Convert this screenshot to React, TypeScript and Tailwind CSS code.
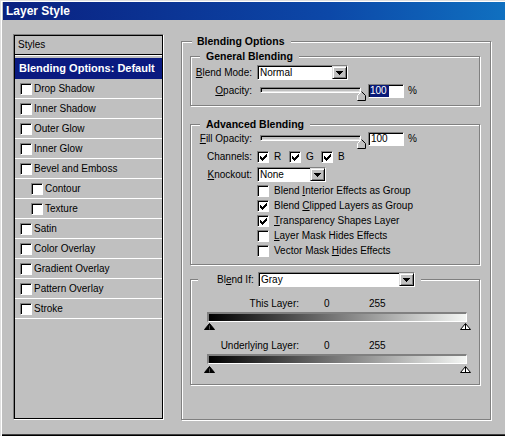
import type { ReactNode } from 'react';

const sunken =
  'border border-t-[#808080] border-l-[#808080] border-b-white border-r-white shadow-[inset_1px_1px_0_#000]';

const etched =
  'border border-[#808080] shadow-[inset_1px_1px_0_#fff,1px_1px_0_#fff]';

function Check({ checked = false }: { checked?: boolean }) {
  return (
    <span
      className={`flex h-[12px] w-[12px] shrink-0 items-center justify-center bg-white ${sunken}`}
    >
      {checked && (
        <svg width="7" height="7" viewBox="0 0 7 7" shapeRendering="crispEdges" className="ml-[1px] mt-[1px]">
          <path d="M6 0h1v1H6zM5 1h2v1H5zM0 2h1v1H0zM4 2h3v1H4zM0 3h2v1H0zM3 3h3v1H3zM0 4h5v1H0zM1 5h3v1H1zM2 6h1v1H2z" fill="#000" />
        </svg>
      )}
    </span>
  );
}

function Select({ value, className }: { value: string; className: string }) {
  return (
    <div className={`flex h-[15px] bg-white ${sunken} ${className}`}>
      <span className="flex-1 pl-[2px] leading-[13px]">{value}</span>
      <span className="flex h-full w-[15px] items-center justify-center border border-t-[#dfdfdf] border-l-[#dfdfdf] border-b-black border-r-black bg-[#c0c0c0] shadow-[inset_1px_1px_0_#fff,inset_-1px_-1px_0_#808080]">
        <svg width="7" height="4" viewBox="0 0 7 4" shapeRendering="crispEdges">
          <path d="M0 0h7v1H0zM1 1h5v1H1zM2 2h3v1H2zM3 3h1v1H3z" fill="#000" />
        </svg>
      </span>
    </div>
  );
}

function Slider() {
  return (
    <div className="relative h-[14px] w-[106px] shrink-0">
      <div className="mt-[5px] h-[6px] w-[101px] border border-t-[#808080] border-l-[#808080] border-b-white border-r-white shadow-[inset_1px_1px_0_#000,inset_-1px_-1px_0_#dfdfdf]" />
      <svg className="absolute bottom-0 right-0" width="9" height="10" viewBox="0 0 9 10">
        <polygon points="0.5,9.5 0.5,4.5 4.5,0.5 8.5,4.5 8.5,9.5" fill="#c0c0c0" />
        <polyline points="0.5,9 0.5,4.5 4.5,0.5" fill="none" stroke="#fff" />
        <polyline points="4.5,0.5 8.5,4.5 8.5,9.5 0.5,9.5" fill="none" stroke="#000" />
      </svg>
    </div>
  );
}

function Label({ children, className = 'w-[61px]' }: { children: ReactNode; className?: string }) {
  return <span className={`shrink-0 text-right ${className}`}>{children}</span>;
}

function U({ children }: { children: ReactNode }) {
  return <span className="underline underline-offset-[1px]">{children}</span>;
}

function SliderRow({ label, selected, className }: { label: ReactNode; selected?: boolean; className: string }) {
  return (
    <div className={`flex h-[14px] items-center ${className}`}>
      <Label>{label}</Label>
      <div className="ml-[8px]">
        <Slider />
      </div>
      <div className={`ml-[2px] flex h-[14px] w-[36px] items-center bg-white pl-[1px] ${sunken}`}>
        {selected ? (
          <span className="bg-[#0a1a78] pr-[2px] leading-[12px] text-white">100</span>
        ) : (
          <span className="pl-[1px] leading-[12px]">100</span>
        )}
      </div>
      <span className="ml-[4px]">%</span>
    </div>
  );
}

function Triangles() {
  return (
    <div className="ml-[13px] flex h-[7px] w-[267px] justify-between">
      <svg width="11" height="7" viewBox="0 0 11 7">
        <polygon points="0.5,6.5 5.5,0.5 10.5,6.5" fill="#000" stroke="#000" />
        <line x1="5.5" y1="2.5" x2="5.5" y2="6.5" stroke="#555" />
      </svg>
      <svg width="11" height="7" viewBox="0 0 11 7">
        <polygon points="0.5,6.5 5.5,0.5 10.5,6.5" fill="#fff" stroke="#000" />
        <line x1="5.5" y1="1" x2="5.5" y2="6.5" stroke="#000" />
      </svg>
    </div>
  );
}

function GrayBar() {
  return (
    <div className="ml-[16px] h-[10px] w-[260px] border-t-2 border-l-2 border-r border-b border-t-[#808080] border-l-[#808080] border-r-white border-b-white bg-[linear-gradient(to_right,#000,#7a7a7a_50%,#f4f6f4)]" />
  );
}

function LayerRow({ label, className }: { label: string; className: string }) {
  return (
    <div className={`flex h-[14px] items-center ${className}`}>
      <Label className="w-[108px]">{label}</Label>
      <span className="ml-[25px] w-[45px]">0</span>
      <span>255</span>
    </div>
  );
}

const styleRows: { name: string; indent?: boolean }[] = [
  { name: 'Drop Shadow' },
  { name: 'Inner Shadow' },
  { name: 'Outer Glow' },
  { name: 'Inner Glow' },
  { name: 'Bevel and Emboss' },
  { name: 'Contour', indent: true },
  { name: 'Texture', indent: true },
  { name: 'Satin' },
  { name: 'Color Overlay' },
  { name: 'Gradient Overlay' },
  { name: 'Pattern Overlay' },
  { name: 'Stroke' },
];

function StylesPanel() {
  return (
    <div className="h-[386px] w-[151px] shrink-0 border border-t-[#808080] border-l-[#808080] border-b-white border-r-white">
      <div className="h-full border border-black">
        <div className="h-[19px] border-b border-black pl-[3px] leading-[18px] shadow-[0_1px_0_#fff]">Styles</div>
        <div className="mt-[3px] h-[21px] bg-[#0a1a80] pl-[4px] text-[11px] font-bold leading-[21px] text-white">
          Blending Options: Default
        </div>
        {styleRows.map((r) => (
          <div
            key={r.name}
            className={`flex h-[20px] items-center border-b border-white ${r.indent ? 'pl-[16px]' : 'pl-[5px]'}`}
          >
            <Check />
            <span className="ml-[2px]">{r.name}</span>
          </div>
        ))}
      </div>
    </div>
  );
}

const advancedChecks: { label: ReactNode; checked: boolean }[] = [
  { label: <>Blend <U>I</U>nterior Effects as Group</>, checked: false },
  { label: <>Blend <U>C</U>lipped Layers as Group</>, checked: true },
  { label: <><U>T</U>ransparency Shapes Layer</>, checked: true },
  { label: <><U>L</U>ayer Mask Hides Effects</>, checked: false },
  { label: <>Vector Mask <U>H</U>ides Effects</>, checked: false },
];

export default function App() {
  return (
    <div className="relative h-[436px] w-[505px] overflow-hidden bg-[#c0c0c0] pl-[3px] pt-[2px] font-['Liberation_Sans',Arial,sans-serif] text-[10px] leading-[14px] text-black shadow-[inset_1px_1px_0_#dfdfdf,inset_2px_2px_0_#fff,inset_0_-1px_0_#000,inset_0_-2px_0_#404040]">
      <div className="h-[18px] bg-[linear-gradient(to_right,#0a2080,#0c48a8_65%,#1070c0)] pl-[3px] text-[12px] font-bold leading-[19px] text-white">
        Layer Style
      </div>

      <div className="flex pl-[10px] pt-[14px]">
        <StylesPanel />

        <fieldset className={`ml-[17px] h-[386px] w-[310px] ${etched}`}>
          <legend className="ml-[10px] bg-[#c0c0c0] pl-[5px] pr-[6px] text-[10.5px] font-bold leading-[14px]">
            Blending Options
          </legend>

          <fieldset className={`ml-[8px] mt-[1px] h-[57px] w-[290px] ${etched}`}>
            <legend className="ml-[9px] bg-[#c0c0c0] px-[6px] text-[10.5px] font-bold leading-[14px]">
              General Blending
            </legend>
            <div className="mt-[2px] flex h-[15px] items-center">
              <Label><U>B</U>lend Mode:</Label>
              <Select value="Normal" className="ml-[5px] w-[91px]" />
            </div>
            <SliderRow label={<><U>O</U>pacity:</>} selected className="mt-[4px]" />
          </fieldset>

          <fieldset className={`ml-[8px] mt-[11px] h-[148px] w-[290px] ${etched}`}>
            <legend className="ml-[9px] bg-[#c0c0c0] px-[6px] text-[10.5px] font-bold leading-[14px]">
              Advanced Blending
            </legend>
            <SliderRow label={<><U>F</U>ill Opacity:</>} className="mt-[1px]" />
            <div className="mt-[4px] flex h-[14px] items-center">
              <Label>Channels:</Label>
              <div className="ml-[5px] flex">
                {['R', 'G', 'B'].map((c) => (
                  <div key={c} className="flex w-[32px] items-center">
                    <Check checked />
                    <span className="ml-[5px]">{c}</span>
                  </div>
                ))}
              </div>
            </div>
            <div className="mt-[3px] flex h-[15px] items-center">
              <Label><U>K</U>nockout:</Label>
              <Select value="None" className="ml-[5px] w-[69px]" />
            </div>
            <div className="mt-[1px]">
              {advancedChecks.map((c, i) => (
                <div key={i} className="flex h-[15px] items-center pl-[66px]">
                  <Check checked={c.checked} />
                  <span className="ml-[5px]">{c.label}</span>
                </div>
              ))}
            </div>
          </fieldset>

          <fieldset className={`ml-[8px] mt-[7px] h-[113px] w-[290px] ${etched}`}>
            <legend className="ml-[7px] bg-[#c0c0c0]">
              <div className="flex h-[15px] items-center pl-[19px] pr-[6px]">
                <span className="w-[41px] shrink-0">Bl<U>e</U>nd If:</span>
                <Select value="Gray" className="w-[157px]" />
              </div>
            </legend>
            <LayerRow label="This Layer:" className="mt-[10px]" />
            <div className="mt-[1px]">
              <GrayBar />
            </div>
            <div className="mt-[1px]">
              <Triangles />
            </div>
            <LayerRow label="Underlying Layer:" className="mt-[9px]" />
            <div className="mt-[1px]">
              <GrayBar />
            </div>
            <div className="mt-[2px]">
              <Triangles />
            </div>
          </fieldset>
        </fieldset>
      </div>
    </div>
  );
}
